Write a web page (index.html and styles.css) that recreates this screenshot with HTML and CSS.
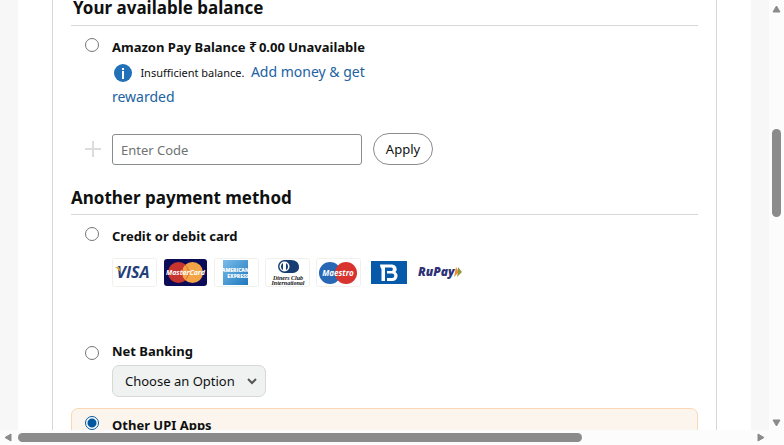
FILE: index.html
```html
<!DOCTYPE html>
<html lang="en">
<head>
<meta charset="utf-8">
<title>Select a payment method</title>
<link rel="stylesheet" href="styles.css">
</head>
<body>
<div class="window">
  <main class="viewport">
    <div class="page">
      <form class="panel">
        <section class="section">
          <h2 class="heading heading-first">Your available balance</h2>
          <div class="option">
            <input class="radio" type="radio" name="method" id="balance">
            <div class="body">
              <label class="title" for="balance">Amazon Pay Balance <span class="rupee">₹</span>0.00 Unavailable</label>
              <p class="note">
                <svg class="info" viewBox="0 0 18 18" aria-hidden="true"><circle cx="9" cy="9" r="9" fill="#2270b8"/><rect x="8" y="4" width="2" height="2" fill="#fff"/><rect x="8" y="7" width="2" height="8" fill="#fff"/></svg>
                <span class="small">Insufficient balance.</span>
                <a class="link" href="#">Add money &amp; get rewarded</a>
              </p>
            </div>
          </div>
          <div class="code-row">
            <svg class="plus" viewBox="0 0 16 16" aria-hidden="true"><path d="M8 0v16M0 8h16" stroke="#dcdcdc" stroke-width="2"/></svg>
            <input class="code" type="text" placeholder="Enter Code" aria-label="Enter Code">
            <button class="apply" type="button">Apply</button>
          </div>
        </section>
        <section class="section">
          <h2 class="heading">Another payment method</h2>
          <div class="option option-card">
            <input class="radio" type="radio" name="method" id="card">
            <div class="body">
              <label class="title" for="card">Credit or debit card</label>
              <div class="cards">
                <svg class="card" viewBox="0 0 45 29" role="img" aria-label="Visa"><rect x=".5" y=".5" width="44" height="28" rx="2" fill="#fff" stroke="#f0f0ec"/><text x="21" y="20" text-anchor="middle" class="visa">VISA</text><path d="M3 9h4l2 5z" fill="#e5a93c"/></svg>
                <svg class="card" viewBox="0 0 45 29" role="img" aria-label="MasterCard"><rect x="1" y="1" width="43" height="27" rx="3" fill="#0b0b58"/><circle cx="15.500" cy="14.500" r="10.500" fill="#c8342e"/><circle cx="29.500" cy="14.500" r="10.500" fill="#f3a447"/><path d="M22.500 7.400a10 10 0 0 1 0 14.200" fill="none" stroke="#c8342e" stroke-dasharray="1 1"/><text x="22.500" y="17" text-anchor="middle" class="master">MasterCard</text></svg>
                <svg class="card" viewBox="0 0 45 29" role="img" aria-label="American Express"><defs><linearGradient id="amex" x1="0" y1="0" x2="1" y2="1"><stop offset="0" stop-color="#79bdea"/><stop offset="1" stop-color="#1f78bd"/></linearGradient></defs><rect x=".5" y=".5" width="44" height="28" rx="2" fill="#fff" stroke="#f0f0ec"/><rect x="9" y="2" width="25" height="25" fill="url(#amex)"/><text x="21.500" y="14" text-anchor="middle" class="amex">AMERICAN</text><text x="24" y="20" text-anchor="middle" class="amex">EXPRESS</text></svg>
                <svg class="card" viewBox="0 0 45 29" role="img" aria-label="Diners Club International"><rect x=".5" y=".5" width="44" height="28" rx="2" fill="#fff" stroke="#f0f0ec"/><path d="M19 2h7c5 0 8 3 8 7s-3 6-8 6h-7z" fill="#173d73"/><circle cx="19.500" cy="8.500" r="6.500" fill="#173d73"/><circle cx="19.500" cy="8.500" r="5" fill="#fff"/><path d="M18 5a4 4 0 0 0 0 7zM21 5a4 4 0 0 1 0 7z" fill="#173d73"/><text x="23" y="22" text-anchor="middle" class="diners">Diners Club</text><text x="23" y="27" text-anchor="middle" class="diners">International</text></svg>
                <svg class="card" viewBox="0 0 45 29" role="img" aria-label="Maestro"><rect x=".5" y=".5" width="44" height="28" rx="2" fill="#fff" stroke="#f0f0ec"/><circle cx="14" cy="15" r="11" fill="#2867b5"/><circle cx="30" cy="15" r="11" fill="#d8332e"/><text x="22" y="18" text-anchor="middle" class="maestro">Maestro</text></svg>
                <svg class="card" viewBox="0 0 45 29" role="img" aria-label="Bajaj Finserv"><rect x="4" y="3" width="36" height="23" fill="#075aa9"/><path d="M13 6.500h12a4.500 4.500 0 0 1 3.500 7.500 5 5 0 0 1-3 9H20v-3h5a2 2 0 0 0 0-4.500h-5v-2.500h4.500a1.800 1.800 0 0 0 0-3.500H18V23h-3.500V11q-1.500-1-1.500-4.500z" fill="#fff"/></svg>
                <svg class="card" viewBox="0 0 45 29" role="img" aria-label="RuPay"><text x="0" y="18" class="rupay">RuPay</text><path d="M38 9l3 5-5 5z" fill="#f08a35"/><path d="M40 9l4 5-5 5 1-5z" fill="#8f9a3f"/></svg>
              </div>
            </div>
          </div>
          <div class="option option-bank">
            <input class="radio radio-low" type="radio" name="method" id="bank">
            <div class="body">
              <label class="title" for="bank">Net Banking</label>
              <div class="picker">
                <select class="select" aria-label="Bank"><option>Choose an Option</option></select>
                <svg class="chevron" viewBox="0 0 10 7" aria-hidden="true"><path d="M1 1l4 4 4-4" fill="none" stroke="#555" stroke-width="2"/></svg>
              </div>
            </div>
          </div>
          <div class="option option-upi">
            <input class="radio" type="radio" name="method" id="upi" checked>
            <div class="body"><label class="title" for="upi">Other UPI Apps</label></div>
          </div>
        </section>
      </form>
    </div>
  </main>
  <div class="scroll scroll-y" aria-hidden="true">
    <svg class="arrow" viewBox="0 0 9 8"><path d="M4.500 1L8 7H1z"/></svg>
    <div class="track"><span class="before"></span><span class="thumb"></span><span class="after"></span></div>
    <svg class="arrow" viewBox="0 0 9 8"><path d="M4.500 7L8 1H1z"/></svg>
  </div>
  <div class="scroll scroll-x" aria-hidden="true">
    <svg class="arrow" viewBox="0 0 8 9"><path d="M1 4.500L7 1v7z"/></svg>
    <div class="track"><span class="thumb"></span><span class="after"></span></div>
    <svg class="arrow" viewBox="0 0 8 9"><path d="M7 4.500L1 1v7z"/></svg>
  </div>
</div>
</body>
</html>
```
FILE: styles.css
```css
* { box-sizing: border-box; }
body {
  margin: 0;
  color: #0f1111;
  background: #fcfcfc;
  font: 13px/25px "Noto Sans", sans-serif;
}
.window {
  display: grid;
  grid-template: minmax(0, 1fr) 15px / minmax(0, 1fr) 15px;
  height: 100vh;
  overflow: hidden;
}
.viewport { overflow: hidden; padding: 0 18px; background: #f7f7f7; }
.page { padding: 0 34px; background: #fff; }
.panel { padding: 0 18px; border: solid #d5d9d9; border-width: 0 1px; }
.section { display: flow-root; }
.heading {
  margin: 0;
  padding-bottom: 2px;
  border-bottom: 1px solid #d5d9d9;
  font-size: 17px;
  line-height: 28px;
}
/* The list is scrolled a little past its top edge. */
.heading-first { margin-top: -6px; padding: 0 0 3px 2px; }
.option { display: flex; padding-left: 14px; }
.section > .heading-first + .option { padding-top: 8px; }
.radio {
  appearance: none;
  flex: none;
  width: 14px;
  height: 14px;
  margin: 4px 13px 0 0;
  border: 1px solid #767676;
  border-radius: 50%;
  background: #fff;
}
.radio:checked { border-color: #0057a0; background: radial-gradient(circle, #0057a0 4px, #fff 5px); }
.radio-low { margin-top: 8px; }
.body { min-width: 0; padding-top: 1px; }
.title { display: block; font-weight: 700; }
.rupee { margin: 0 2px 0 0; font-size: 14px; font-weight: 600; line-height: 1; }
.note { max-width: 260px; margin: 0; }
.info { width: 18px; height: 18px; margin: 0 5px 0 2px; vertical-align: -5px; }
.small { margin-right: 3px; font-size: 11px; }
.link { color: #2162a1; font-size: 14px; line-height: 1; text-decoration: none; }
.code-row { display: flex; align-items: center; padding: 23px 0 19px 14px; }
.plus { width: 16px; height: 16px; margin-right: 11px; }
.code {
  flex: 0 1 250px;
  min-width: 0;
  height: 31px;
  margin-right: 11px;
  padding: 1px 8px 0;
  border: 1px solid #888c8c;
  border-radius: 3px;
  font: inherit;
}
.code::placeholder { color: #6f7373; opacity: 1; }
.apply {
  width: 60px;
  height: 32px;
  padding: 0;
  border: 1px solid #888c8c;
  border-radius: 16px;
  background: #fff;
  color: inherit;
  font: inherit;
}
.option-card { padding-top: 8px; }
.cards { display: flex; flex-wrap: wrap; gap: 6px; margin-top: 9px; }
.card { width: 45px; height: 29px; }
.card text { font-family: "Open Sans", sans-serif; font-weight: 800; }
.card .visa { font-size: 16px; font-style: italic; font-weight: 700; fill: #243f7b; }
.card .master { font-size: 7px; font-style: italic; font-weight: 700; fill: #fff; }
.card .amex { font-size: 5px; fill: #fff; }
.card .diners { font: italic 700 6px "Liberation Serif", serif; fill: #111; }
.card .maestro { font-size: 8px; font-weight: 700; font-style: italic; fill: #fff; }
.card .rupay { font-size: 12px; font-style: italic; fill: #2d3276; }
.option-bank { padding-top: 51px; }
.picker { display: flex; align-items: center; position: relative; margin-top: 1px; width: 154px; }
.select {
  appearance: none;
  width: 100%;
  height: 32px;
  padding: 0 24px 0 12px;
  border: 1px solid #d5d9d9;
  border-radius: 7px;
  background: #f0f2f2;
  color: inherit;
  font: inherit;
}
.chevron { position: absolute; right: 9px; width: 10px; height: 7px; pointer-events: none; }
.option-upi {
  margin-top: 11px;
  padding: 3px 13px 20px;
  border: 1px solid #fbd8b4;
  border-radius: 7px;
  background: #fcf5ee;
}
.scroll { display: flex; align-items: center; background: #fcfcfc; }
.scroll-y { flex-direction: column; padding: 5px 0 3px; }
.scroll-x { padding: 0 4px; }
.arrow { flex: none; fill: #8b8b8b; stroke: #8b8b8b; stroke-linejoin: round; }
.scroll-y .arrow { width: 9px; height: 8px; }
.scroll-x .arrow { width: 8px; height: 9px; }
.track { display: flex; flex: 1; }
.thumb { border-radius: 5px; background: #8b8b8b; }
.scroll-y .track { flex-direction: column; padding: 5px 0; }
.scroll-y .before { flex: 111; }
.scroll-y .thumb { flex: 88; width: 9px; }
.scroll-y .after { flex: 197; }
.scroll-x .track { padding: 0 6px; }
.scroll-x .thumb { flex: 564; height: 9px; }
.scroll-x .after { flex: 169; }
```
